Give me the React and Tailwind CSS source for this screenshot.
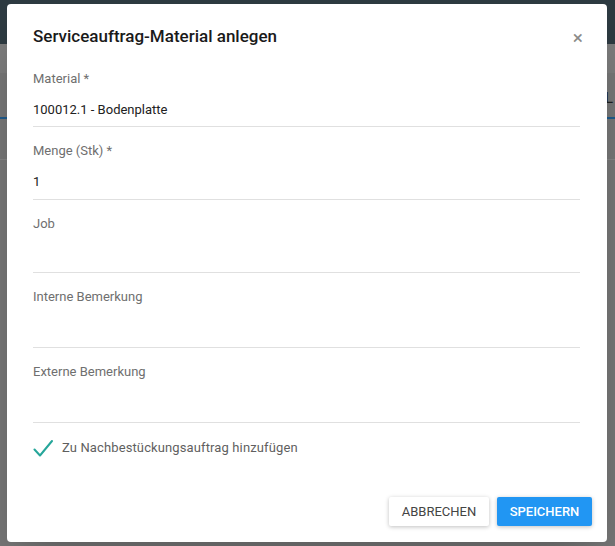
import React from 'react';

// Dialog "Serviceauftrag-Material anlegen" over a dimmed page.

const fields = [
  { label: 'Material *', value: '100012.1 - Bodenplatte', h: 'h-[72px]' },
  { label: 'Menge (Stk) *', value: '1', h: 'h-[73px]' },
  { label: 'Job', value: '', h: 'h-[73px]' },
  { label: 'Interne Bemerkung', value: '', h: 'h-[75px]' },
  { label: 'Externe Bemerkung', value: '', h: 'h-[75px]' },
];

const Field = ({ label, value, h }) => (
  <div className={`${h} flex flex-col border-b border-[#e0e0e0]`}>
    <div className="pt-[16px] text-[13px] leading-[16px] text-[#6f6f6f]">{label}</div>
    <div className="pt-[15px] text-[13px] leading-[16px] text-[#212121]">{value}</div>
  </div>
);

const App = () => (
  <div className="relative w-[615px] h-[546px] overflow-hidden bg-[#777777] font-['Roboto',sans-serif]">
    {/* dimmed page behind the dialog */}
    <div className="h-[44px] bg-[#2e3b42]" />
    <div className="h-[29px] bg-[#7d7d7d]" />
    <div className="flex justify-end pr-[2px] pt-[14px] text-[15px] text-[#1f1f1f]">L</div>
    <div className="h-[2px] bg-[#1f5b8c] mt-[7px]" />
    <div className="h-[40px]" />
    <div className="h-px bg-[#858585]" />

    {/* dialog */}
    <div className="absolute left-[7px] top-[4px] w-[600px] h-[538px] bg-white rounded-[4px] shadow-2xl flex flex-col">
      <div className="flex items-center justify-between pl-[26px] pr-[24px] pt-[15px] h-[51px]">
        <h2 className="text-[17px] font-medium text-[#1a1a1a]">Serviceauftrag-Material anlegen</h2>
        <span className="text-[19px] leading-none text-[#8a8a8a]">×</span>
      </div>
      <div className="flex flex-col px-[26px] pr-[27px]">
        {fields.map((f) => (
          <Field key={f.label} {...f} />
        ))}
        <div className="flex items-center gap-[9px] pt-[15px]">
          <svg width="20" height="20" viewBox="0 0 20 20" fill="none">
            <path d="M1.5 11.5 L7 17.5 L19 3" stroke="#26a69a" strokeWidth="2" strokeLinecap="round" strokeLinejoin="round" />
          </svg>
          <span className="text-[13px] tracking-[0.12px] text-[#5f5f5f]">Zu Nachbestückungsauftrag hinzufügen</span>
        </div>
      </div>
      <div className="mt-auto flex justify-end gap-[8px] pr-[15px] pb-[16px]">
        <button className="h-[29px] w-[100px] rounded-[2px] bg-white text-[13px] text-[#444444] shadow-[0_1px_4px_rgba(0,0,0,0.25)]">
          ABBRECHEN
        </button>
        <button className="h-[29px] w-[95px] rounded-[2px] bg-[#2196f3] text-[13px] font-medium text-white shadow-[0_1px_4px_rgba(0,0,0,0.25)]">
          SPEICHERN
        </button>
      </div>
    </div>
  </div>
);

export default App;
